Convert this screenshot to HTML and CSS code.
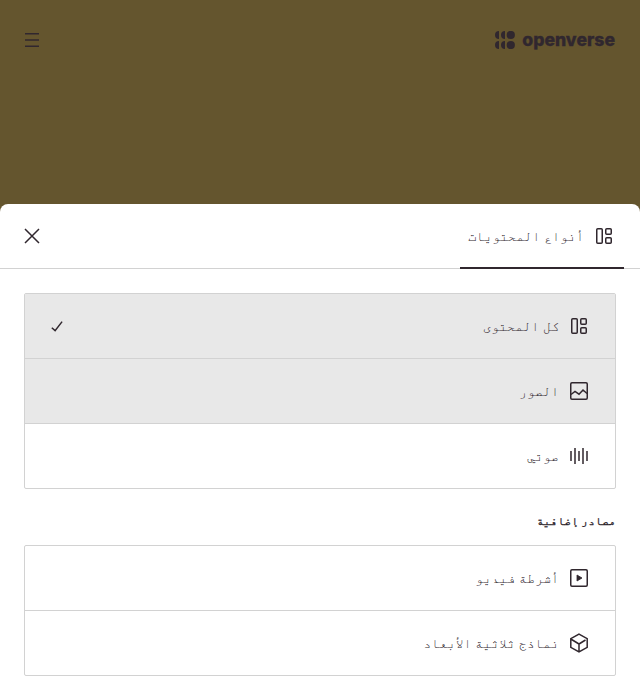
FILE: index.html
```html
<!DOCTYPE html>
<html lang="ar" dir="rtl">
<head>
<meta charset="utf-8">
<title>Openverse</title>
<link rel="stylesheet" href="styles.css">
</head>
<body>
<svg class="sprite" aria-hidden="true">
  <symbol id="all" viewBox="0 0 24 24"><rect x="4.75" y="4.75" width="5.5" height="14.5" rx="1"/><rect x="13.75" y="4.75" width="5.5" height="5.5" rx="1"/><rect x="13.75" y="13.75" width="5.5" height="5.5" rx="1"/></symbol>
  <symbol id="image" viewBox="0 0 24 24"><rect x="3.75" y="3.75" width="16.5" height="16.5" rx="1.2"/><path d="M4 15.5 8 12.5 12 15.2 16 11 20 14.5"/></symbol>
  <symbol id="audio" viewBox="0 0 24 24"><path d="M4 7v10M8 4v16M12 7v10M16 4v16M20 7v10"/></symbol>
  <symbol id="video" viewBox="0 0 24 24"><rect x="3.75" y="3.75" width="16.5" height="16.5" rx="1.2"/><path class="solid" d="M10 9v6l5-3z"/></symbol>
  <symbol id="model" viewBox="0 0 24 24"><path d="M12 3.2 20.2 7.6v8.8L12 20.8 3.8 16.4V7.6zM3.8 8 12 13l6.5-4M12 13v7.5"/></symbol>
</svg>
<header class="header">
  <a class="brand" dir="ltr">
    <svg class="mark" viewBox="0 0 20 18"><path d="M4 0v8a4 4 0 0 1 0-8zM10 0v8a4 4 0 0 1 0-8zM4 10v8a4 4 0 0 1 0-8zM10 10v8a4 4 0 0 1 0-8z"/><circle cx="15.8" cy="4" r="4.1"/><circle cx="15.8" cy="14" r="4.1"/></svg>
    <span class="wordmark">openverse</span>
  </a>
  <svg class="icon menu" viewBox="0 0 24 24"><path d="M5 5.75h14M5 12h14M5 18.25h14"/></svg>
</header>
<main class="sheet">
  <div class="tabs">
    <div class="tab"><svg class="icon"><use href="#all"/></svg><span>أنواع المحتويات</span></div>
    <svg class="icon close" viewBox="0 0 24 24"><path d="m5 5 14 14M19 5 5 19"/></svg>
  </div>
  <div class="content">
    <ul class="list">
      <li class="item active"><svg class="icon"><use href="#all"/></svg><span>كل المحتوى</span><svg class="icon check" viewBox="0 0 24 24"><path d="m6.8 13.8 3.3 2.8 7-9"/></svg></li>
      <li class="item active"><svg class="icon"><use href="#image"/></svg><span>الصور</span></li>
      <li class="item"><svg class="icon"><use href="#audio"/></svg><span>صوتي</span></li>
    </ul>
    <h2 class="heading">مصادر إضافية</h2>
    <ul class="list">
      <li class="item"><svg class="icon"><use href="#video"/></svg><span>أشرطة فيديو</span></li>
      <li class="item"><svg class="icon"><use href="#model"/></svg><span>نماذج ثلاثية الأبعاد</span></li>
    </ul>
  </div>
</main>
</body>
</html>
```
FILE: styles.css
```css
* { box-sizing: border-box; }
body { margin: 0; height: 700px; overflow: hidden; background: #64552e; color: #30272e; font-family: Inter, FreeMono, "DejaVu Sans Mono", monospace; font-size: 13.33px; }
.sprite { position: absolute; width: 0; height: 0; }
.header { height: 204px; padding: 28px 25px 0 20px; display: flex; justify-content: space-between; align-items: flex-start; }
.brand { display: flex; align-items: center; gap: 7px; height: 24px; }
.mark { width: 20px; height: 18px; fill: #30272e; }
.wordmark { font: 800 17.6px/24px Inter, sans-serif; letter-spacing: 0; -webkit-text-stroke: 0.3px #30272e; }
.icon { width: 24px; height: 24px; flex: none; fill: none; stroke: #30272e; stroke-width: 1.5; }
.solid { fill: #30272e; stroke-width: 0.8; }
.sheet { height: 496px; background: #fff; border-radius: 8px 8px 0 0; }
.tabs { height: 65px; padding: 0 16px 0 20px; display: flex; justify-content: space-between; border-bottom: 1px solid #d2d2d2; }
.tab { display: flex; align-items: center; gap: 8px; height: 65px; width: 164px; padding: 0 8px; border-bottom: 2px solid #30272e; white-space: nowrap; }
.close { margin-top: 20px; }
.content { padding: 24px 24px 0; }
.list { list-style: none; margin: 0; padding: 0; border: 1px solid #d2d2d2; border-radius: 2px; }
.item { display: flex; align-items: center; gap: 8px; height: 65px; padding: 0 24px 0 20px; border-bottom: 1px solid #d2d2d2; }
.item:last-child { height: 64px; border-bottom: 0; }
.active { background: #e8e8e8; }
.check { margin-inline-start: auto; }
.heading { margin: 24px 0 16px; font-size: 11.6px; line-height: 16px; font-weight: 600; -webkit-text-stroke: 0.25px #30272e; }
```
